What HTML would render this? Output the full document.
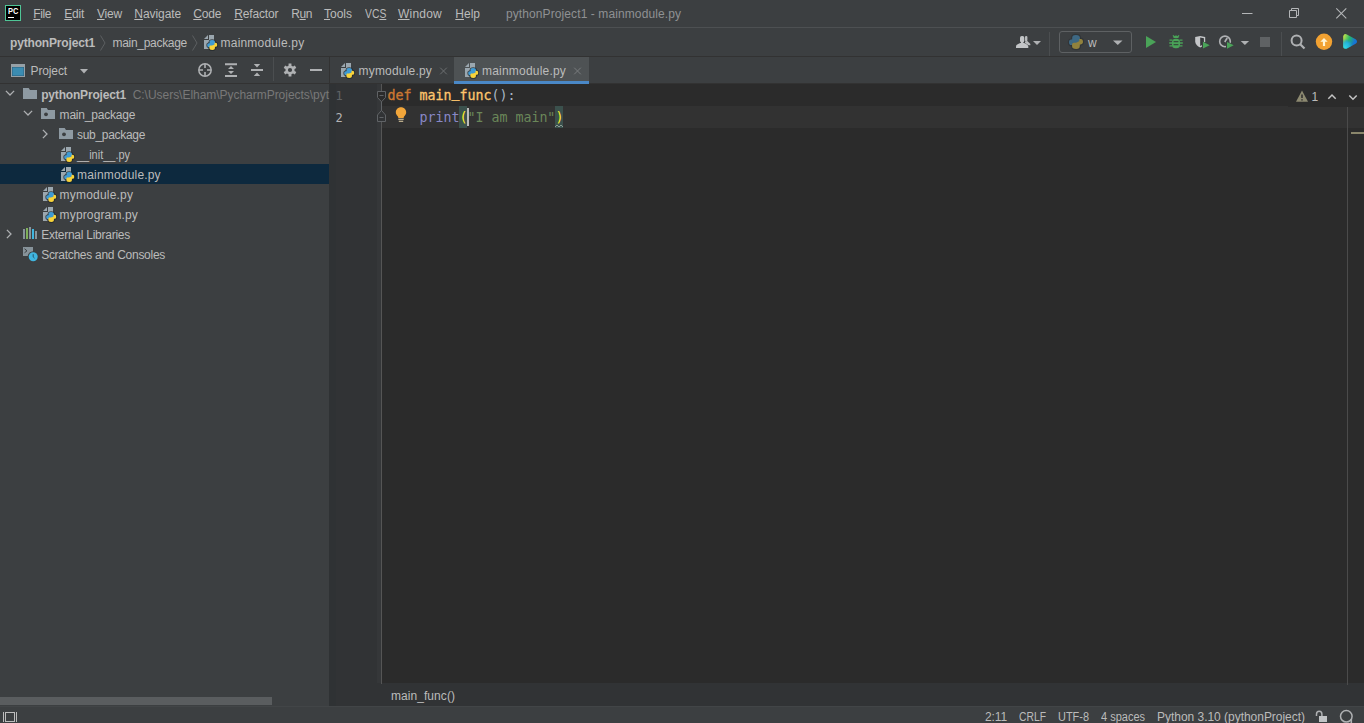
<!DOCTYPE html>
<html lang="en">
<head>
<meta charset="utf-8">
<title>pythonProject1 - mainmodule.py</title>
<style>
html,body{margin:0;padding:0;}
body{width:1364px;height:723px;overflow:hidden;background:#3c3f41;position:relative;font-family:"Liberation Sans",sans-serif;font-size:12px;color:#bbbbbb;}
.a{position:absolute;}
.t{position:absolute;white-space:pre;line-height:14px;height:14px;font-family:"Liberation Sans",sans-serif;}
.t u{text-decoration:underline;text-underline-offset:1px;text-decoration-thickness:1px;}
svg{position:absolute;overflow:visible;}
.code{position:absolute;white-space:pre;font-family:"DejaVu Sans Mono","Liberation Mono",monospace;font-size:13.3px;letter-spacing:-0.007px;line-height:22px;height:22px;}
.ln{font-size:12px;}
.us{position:relative;top:-3px;}
</style>
</head>
<body>
<!-- title bar -->
<div class="a" style="left:0;top:27px;width:1364px;height:1px;background:#4d5052"></div>
<!-- nav bar border -->
<div class="a" style="left:0;top:56px;width:1364px;height:1px;background:#323232"></div>
<!-- project tool window -->
<div class="a" style="left:0;top:83px;width:330px;height:1px;background:#323232"></div>
<div class="a" style="left:0;top:164px;width:329px;height:20px;background:#0d293e"></div>
<div class="a" style="left:329px;top:57px;width:1px;height:649px;background:#323232"></div>
<div class="a" style="left:0;top:697px;width:272px;height:8px;background:#5a5d5f"></div>
<!-- editor tabs -->
<div class="a" style="left:330px;top:83px;width:1034px;height:1px;background:#323232"></div>
<div class="a" style="left:454px;top:57px;width:135px;height:27px;background:#4e5254"></div>
<div class="a" style="left:454px;top:81px;width:135px;height:3px;background:#4a88c7"></div>
<!-- editor -->
<div class="a" style="left:330px;top:84px;width:1034px;height:599px;background:#2b2b2b"></div>
<div class="a" style="left:330px;top:84px;width:51px;height:599px;background:#313335"></div>
<div class="a" style="left:377px;top:84px;width:4px;height:599px;background:#353739"></div>
<div class="a" style="left:330px;top:683px;width:1034px;height:23px;background:#313335"></div>
<div class="a" style="left:329px;top:84px;width:7px;height:622px;background:#2f3234"></div>
<div class="a" style="left:381px;top:84px;width:1px;height:600px;background:#555555"></div>
<div class="a" style="left:382px;top:106px;width:982px;height:22px;background:#323232"></div>
<div class="a" style="left:1347px;top:84px;width:1px;height:601px;background:#4b4b4b"></div>
<div class="a" style="left:1351px;top:132px;width:13px;height:2px;background:#8a866b"></div>
<!-- status bar -->
<div class="a" style="left:0;top:706px;width:1364px;height:1px;background:#424547"></div>
<div class="a" style="left:5px;top:5px;width:14px;height:14px;border:1px solid #4fc596;background:#000"></div>
<div class="a" style="left:8px;top:17px;width:6px;height:1px;background:#fff"></div>
<svg style="left:1236px;top:4px" width="20" height="20" viewBox="0 0 20 20" ><path d="M6 9.5h10.5" stroke="#b4b6b8" stroke-width="1" fill="none"/></svg>
<svg style="left:1284px;top:4px" width="20" height="20" viewBox="0 0 20 20" ><path d="M5.5 6.5h7v7h-7zM7.5 6.5v-2h7v7h-2" stroke="#b4b6b8" stroke-width="1" fill="none"/></svg>
<svg style="left:1331px;top:3px" width="20" height="20" viewBox="0 0 20 20" ><path d="M5.3 5.3l10 10M15.3 5.3l-10 10" stroke="#b4b6b8" stroke-width="1.1" fill="none"/></svg>
<svg style="left:98px;top:34px" width="10" height="18" viewBox="0 0 10 18" ><path d="M2.5 1.5L7 9L2.5 16.5" fill="none" stroke="#5c5f61" stroke-width="1"/></svg>
<svg style="left:190px;top:34px" width="10" height="18" viewBox="0 0 10 18" ><path d="M2.5 1.5L7 9L2.5 16.5" fill="none" stroke="#5c5f61" stroke-width="1"/></svg>
<svg style="left:201px;top:34px" width="16" height="16" viewBox="0 0 16 16" ><path fill="#9ba7af" d="M7 1L3 5h4z"/><path fill="#9ba7af" d="M8 1v5H3v9h4.5V8h5.5V1z"/><g transform="translate(6.2,6)"><path d="M4.9 0C2.9 0 2.3.9 2.3 2V3.3H1.6C.5 3.3 0 4.2 0 5.1c0 1.2.5 2.1 1.6 2.1h1.1V5.9c0-.9.7-1.5 1.6-1.5h2.2c.8 0 1.3-.5 1.3-1.3V2C7.8.8 6.9 0 4.9 0z" fill="none" stroke="#1e2428" stroke-opacity=".75" stroke-width="1.7"/><path d="M5.1 10c2 0 2.6-.9 2.6-2V6.7h.7c1.1 0 1.6-.9 1.6-1.8 0-1.2-.5-2.1-1.6-2.1H7.3v1.3c0 .9-.7 1.5-1.6 1.5H3.5c-.8 0-1.3.5-1.3 1.3V8C2.2 9.2 3.1 10 5.1 10z" fill="none" stroke="#1e2428" stroke-opacity=".75" stroke-width="1.7"/><path d="M2.6 3h4.8v4H2.6z" fill="#3f97cf"/><path d="M7.4 4.2L2.6 7.2V7.6h4.8z" fill="#f5d03a"/><path fill="#409bd4" d="M4.9 0C2.9 0 2.3.9 2.3 2V3.3H1.6C.5 3.3 0 4.2 0 5.1c0 1.2.5 2.1 1.6 2.1h1.1V5.9c0-.9.7-1.5 1.6-1.5h2.2c.8 0 1.3-.5 1.3-1.3V2C7.8.8 6.9 0 4.9 0z"/><path fill="#f8d33a" d="M5.1 10c2 0 2.6-.9 2.6-2V6.7h.7c1.1 0 1.6-.9 1.6-1.8 0-1.2-.5-2.1-1.6-2.1H7.3v1.3c0 .9-.7 1.5-1.6 1.5H3.5c-.8 0-1.3.5-1.3 1.3V8C2.2 9.2 3.1 10 5.1 10z"/></g></svg>
<svg style="left:10px;top:63px" width="16" height="16" viewBox="0 0 16 16" ><rect x="1" y="1" width="14" height="13" fill="#96a0a6"/><rect x="2" y="4" width="12" height="9" fill="#2b5f7c"/><rect x="2.5" y="4.5" width="11" height="8" fill="#3b8cb1"/></svg>
<svg style="left:79px;top:67px" width="10" height="8" viewBox="0 0 10 8" ><path d="M1 2h8L5 6.5z" fill="#afb1b3"/></svg>
<svg style="left:197px;top:62px" width="16" height="16" viewBox="0 0 16 16" ><circle cx="8" cy="8" r="6.2" fill="none" stroke="#afb1b3" stroke-width="1.5"/><path d="M8 2v4M8 10v4M2 8h4M10 8h4" stroke="#afb1b3" stroke-width="1.6"/></svg>
<svg style="left:223px;top:62px" width="16" height="16" viewBox="0 0 16 16" ><path d="M2 1.3h12v2H2zM2 13h12v2H2zM8 3.9l3 3H5zM8 12l3-3H5z" fill="#afb1b3"/></svg>
<svg style="left:249px;top:62px" width="16" height="16" viewBox="0 0 16 16" ><path d="M2 7h12v2H2zM8 5.5l3.2-3.4H4.8zM8 10.5l3.2 3.4H4.8z" fill="#afb1b3"/></svg>
<div class="a" style="left:273px;top:57px;width:1px;height:24px;background:#4b4e50"></div>
<svg style="left:282px;top:62px" width="16" height="16" viewBox="0 0 16 16" ><path fill-rule="evenodd" fill="#afb1b3" d="M6.56 1.56L9.44 1.56L9.47 3.64L11.04 4.55L12.86 3.53L14.3 6.03L12.51 7.09L12.51 8.91L14.3 9.97L12.86 12.47L11.04 11.45L9.47 12.36L9.44 14.44L6.56 14.44L6.53 12.36L4.96 11.45L3.14 12.47L1.7 9.97L3.49 8.91L3.49 7.09L1.7 6.03L3.14 3.53L4.96 4.55L6.53 3.64zM5.9 8a2.1 2.1 0 1 0 4.2 0a2.1 2.1 0 1 0 -4.2 0z"/></svg>
<div class="a" style="left:310px;top:69px;width:12px;height:2px;background:#afb1b3"></div>
<svg style="left:3.5px;top:87.3px" width="12" height="12" viewBox="0 0 12 12" ><path d="M1.9 3.9L6 8L10.1 3.9" fill="none" stroke="#aeb0b2" stroke-width="1.3"/></svg>
<svg style="left:22px;top:86px" width="16" height="16" viewBox="0 0 16 16" ><path fill="#8e9aa2" d="M1 13h14V4H7.98L6.7 2H1z"/></svg>
<svg style="left:21.5px;top:107.3px" width="12" height="12" viewBox="0 0 12 12" ><path d="M1.9 3.9L6 8L10.1 3.9" fill="none" stroke="#aeb0b2" stroke-width="1.3"/></svg>
<svg style="left:40px;top:106px" width="16" height="16" viewBox="0 0 16 16" ><path fill="#8e9aa2" d="M1 13h14V4H7.98L6.7 2H1z"/><circle cx="6" cy="8.3" r="1.9" fill="#3c3f41"/></svg>
<svg style="left:39.3px;top:127.69999999999999px" width="12" height="12" viewBox="0 0 12 12" ><path d="M3.9 1.9L8 6L3.9 10.1" fill="none" stroke="#aeb0b2" stroke-width="1.3"/></svg>
<svg style="left:58px;top:126px" width="16" height="16" viewBox="0 0 16 16" ><path fill="#8e9aa2" d="M1 13h14V4H7.98L6.7 2H1z"/><circle cx="6" cy="8.3" r="1.9" fill="#3c3f41"/></svg>
<svg style="left:58px;top:146px" width="16" height="16" viewBox="0 0 16 16" ><path fill="#9ba7af" d="M7 1L3 5h4z"/><path fill="#9ba7af" d="M8 1v5H3v9h4.5V8h5.5V1z"/><g transform="translate(6.2,6)"><path d="M4.9 0C2.9 0 2.3.9 2.3 2V3.3H1.6C.5 3.3 0 4.2 0 5.1c0 1.2.5 2.1 1.6 2.1h1.1V5.9c0-.9.7-1.5 1.6-1.5h2.2c.8 0 1.3-.5 1.3-1.3V2C7.8.8 6.9 0 4.9 0z" fill="none" stroke="#1e2428" stroke-opacity=".75" stroke-width="1.7"/><path d="M5.1 10c2 0 2.6-.9 2.6-2V6.7h.7c1.1 0 1.6-.9 1.6-1.8 0-1.2-.5-2.1-1.6-2.1H7.3v1.3c0 .9-.7 1.5-1.6 1.5H3.5c-.8 0-1.3.5-1.3 1.3V8C2.2 9.2 3.1 10 5.1 10z" fill="none" stroke="#1e2428" stroke-opacity=".75" stroke-width="1.7"/><path d="M2.6 3h4.8v4H2.6z" fill="#3f97cf"/><path d="M7.4 4.2L2.6 7.2V7.6h4.8z" fill="#f5d03a"/><path fill="#409bd4" d="M4.9 0C2.9 0 2.3.9 2.3 2V3.3H1.6C.5 3.3 0 4.2 0 5.1c0 1.2.5 2.1 1.6 2.1h1.1V5.9c0-.9.7-1.5 1.6-1.5h2.2c.8 0 1.3-.5 1.3-1.3V2C7.8.8 6.9 0 4.9 0z"/><path fill="#f8d33a" d="M5.1 10c2 0 2.6-.9 2.6-2V6.7h.7c1.1 0 1.6-.9 1.6-1.8 0-1.2-.5-2.1-1.6-2.1H7.3v1.3c0 .9-.7 1.5-1.6 1.5H3.5c-.8 0-1.3.5-1.3 1.3V8C2.2 9.2 3.1 10 5.1 10z"/></g></svg>
<svg style="left:58px;top:166px" width="16" height="16" viewBox="0 0 16 16" ><path fill="#9ba7af" d="M7 1L3 5h4z"/><path fill="#9ba7af" d="M8 1v5H3v9h4.5V8h5.5V1z"/><g transform="translate(6.2,6)"><path d="M4.9 0C2.9 0 2.3.9 2.3 2V3.3H1.6C.5 3.3 0 4.2 0 5.1c0 1.2.5 2.1 1.6 2.1h1.1V5.9c0-.9.7-1.5 1.6-1.5h2.2c.8 0 1.3-.5 1.3-1.3V2C7.8.8 6.9 0 4.9 0z" fill="none" stroke="#1e2428" stroke-opacity=".75" stroke-width="1.7"/><path d="M5.1 10c2 0 2.6-.9 2.6-2V6.7h.7c1.1 0 1.6-.9 1.6-1.8 0-1.2-.5-2.1-1.6-2.1H7.3v1.3c0 .9-.7 1.5-1.6 1.5H3.5c-.8 0-1.3.5-1.3 1.3V8C2.2 9.2 3.1 10 5.1 10z" fill="none" stroke="#1e2428" stroke-opacity=".75" stroke-width="1.7"/><path d="M2.6 3h4.8v4H2.6z" fill="#3f97cf"/><path d="M7.4 4.2L2.6 7.2V7.6h4.8z" fill="#f5d03a"/><path fill="#409bd4" d="M4.9 0C2.9 0 2.3.9 2.3 2V3.3H1.6C.5 3.3 0 4.2 0 5.1c0 1.2.5 2.1 1.6 2.1h1.1V5.9c0-.9.7-1.5 1.6-1.5h2.2c.8 0 1.3-.5 1.3-1.3V2C7.8.8 6.9 0 4.9 0z"/><path fill="#f8d33a" d="M5.1 10c2 0 2.6-.9 2.6-2V6.7h.7c1.1 0 1.6-.9 1.6-1.8 0-1.2-.5-2.1-1.6-2.1H7.3v1.3c0 .9-.7 1.5-1.6 1.5H3.5c-.8 0-1.3.5-1.3 1.3V8C2.2 9.2 3.1 10 5.1 10z"/></g></svg>
<svg style="left:40px;top:186px" width="16" height="16" viewBox="0 0 16 16" ><path fill="#9ba7af" d="M7 1L3 5h4z"/><path fill="#9ba7af" d="M8 1v5H3v9h4.5V8h5.5V1z"/><g transform="translate(6.2,6)"><path d="M4.9 0C2.9 0 2.3.9 2.3 2V3.3H1.6C.5 3.3 0 4.2 0 5.1c0 1.2.5 2.1 1.6 2.1h1.1V5.9c0-.9.7-1.5 1.6-1.5h2.2c.8 0 1.3-.5 1.3-1.3V2C7.8.8 6.9 0 4.9 0z" fill="none" stroke="#1e2428" stroke-opacity=".75" stroke-width="1.7"/><path d="M5.1 10c2 0 2.6-.9 2.6-2V6.7h.7c1.1 0 1.6-.9 1.6-1.8 0-1.2-.5-2.1-1.6-2.1H7.3v1.3c0 .9-.7 1.5-1.6 1.5H3.5c-.8 0-1.3.5-1.3 1.3V8C2.2 9.2 3.1 10 5.1 10z" fill="none" stroke="#1e2428" stroke-opacity=".75" stroke-width="1.7"/><path d="M2.6 3h4.8v4H2.6z" fill="#3f97cf"/><path d="M7.4 4.2L2.6 7.2V7.6h4.8z" fill="#f5d03a"/><path fill="#409bd4" d="M4.9 0C2.9 0 2.3.9 2.3 2V3.3H1.6C.5 3.3 0 4.2 0 5.1c0 1.2.5 2.1 1.6 2.1h1.1V5.9c0-.9.7-1.5 1.6-1.5h2.2c.8 0 1.3-.5 1.3-1.3V2C7.8.8 6.9 0 4.9 0z"/><path fill="#f8d33a" d="M5.1 10c2 0 2.6-.9 2.6-2V6.7h.7c1.1 0 1.6-.9 1.6-1.8 0-1.2-.5-2.1-1.6-2.1H7.3v1.3c0 .9-.7 1.5-1.6 1.5H3.5c-.8 0-1.3.5-1.3 1.3V8C2.2 9.2 3.1 10 5.1 10z"/></g></svg>
<svg style="left:40px;top:206px" width="16" height="16" viewBox="0 0 16 16" ><path fill="#9ba7af" d="M7 1L3 5h4z"/><path fill="#9ba7af" d="M8 1v5H3v9h4.5V8h5.5V1z"/><g transform="translate(6.2,6)"><path d="M4.9 0C2.9 0 2.3.9 2.3 2V3.3H1.6C.5 3.3 0 4.2 0 5.1c0 1.2.5 2.1 1.6 2.1h1.1V5.9c0-.9.7-1.5 1.6-1.5h2.2c.8 0 1.3-.5 1.3-1.3V2C7.8.8 6.9 0 4.9 0z" fill="none" stroke="#1e2428" stroke-opacity=".75" stroke-width="1.7"/><path d="M5.1 10c2 0 2.6-.9 2.6-2V6.7h.7c1.1 0 1.6-.9 1.6-1.8 0-1.2-.5-2.1-1.6-2.1H7.3v1.3c0 .9-.7 1.5-1.6 1.5H3.5c-.8 0-1.3.5-1.3 1.3V8C2.2 9.2 3.1 10 5.1 10z" fill="none" stroke="#1e2428" stroke-opacity=".75" stroke-width="1.7"/><path d="M2.6 3h4.8v4H2.6z" fill="#3f97cf"/><path d="M7.4 4.2L2.6 7.2V7.6h4.8z" fill="#f5d03a"/><path fill="#409bd4" d="M4.9 0C2.9 0 2.3.9 2.3 2V3.3H1.6C.5 3.3 0 4.2 0 5.1c0 1.2.5 2.1 1.6 2.1h1.1V5.9c0-.9.7-1.5 1.6-1.5h2.2c.8 0 1.3-.5 1.3-1.3V2C7.8.8 6.9 0 4.9 0z"/><path fill="#f8d33a" d="M5.1 10c2 0 2.6-.9 2.6-2V6.7h.7c1.1 0 1.6-.9 1.6-1.8 0-1.2-.5-2.1-1.6-2.1H7.3v1.3c0 .9-.7 1.5-1.6 1.5H3.5c-.8 0-1.3.5-1.3 1.3V8C2.2 9.2 3.1 10 5.1 10z"/></g></svg>
<svg style="left:3.1999999999999993px;top:227.6px" width="12" height="12" viewBox="0 0 12 12" ><path d="M3.9 1.9L8 6L3.9 10.1" fill="none" stroke="#aeb0b2" stroke-width="1.3"/></svg>
<svg style="left:22px;top:226px" width="16" height="16" viewBox="0 0 16 16" ><rect x="1" y="3" width="2" height="10" fill="#87939a"/><rect x="4" y="2" width="2" height="11" fill="#7fb05b"/><rect x="7" y="1" width="2" height="12" fill="#87939a"/><rect x="10" y="3" width="2" height="10" fill="#40b6e0"/><rect x="13" y="5" width="2" height="8" fill="#87939a"/></svg>
<svg style="left:22px;top:246px" width="16" height="16" viewBox="0 0 16 16" ><rect x="1" y="1" width="10" height="9" fill="#87939a"/><path d="M2.5 2.8L5 4.8L2.5 6.8" fill="none" stroke="#3c3f41" stroke-width="1"/><circle cx="11.2" cy="10.7" r="5.5" fill="#3c3f41"/><circle cx="11.2" cy="10.7" r="4.5" fill="#40b6e0"/><path d="M11.2 8.2v2.7l1.3 1.2" fill="none" stroke="#26566c" stroke-width="1"/></svg>
<svg style="left:338px;top:62px" width="16" height="16" viewBox="0 0 16 16" ><path fill="#9ba7af" d="M7 1L3 5h4z"/><path fill="#9ba7af" d="M8 1v5H3v9h4.5V8h5.5V1z"/><g transform="translate(6.2,6)"><path d="M4.9 0C2.9 0 2.3.9 2.3 2V3.3H1.6C.5 3.3 0 4.2 0 5.1c0 1.2.5 2.1 1.6 2.1h1.1V5.9c0-.9.7-1.5 1.6-1.5h2.2c.8 0 1.3-.5 1.3-1.3V2C7.8.8 6.9 0 4.9 0z" fill="none" stroke="#1e2428" stroke-opacity=".75" stroke-width="1.7"/><path d="M5.1 10c2 0 2.6-.9 2.6-2V6.7h.7c1.1 0 1.6-.9 1.6-1.8 0-1.2-.5-2.1-1.6-2.1H7.3v1.3c0 .9-.7 1.5-1.6 1.5H3.5c-.8 0-1.3.5-1.3 1.3V8C2.2 9.2 3.1 10 5.1 10z" fill="none" stroke="#1e2428" stroke-opacity=".75" stroke-width="1.7"/><path d="M2.6 3h4.8v4H2.6z" fill="#3f97cf"/><path d="M7.4 4.2L2.6 7.2V7.6h4.8z" fill="#f5d03a"/><path fill="#409bd4" d="M4.9 0C2.9 0 2.3.9 2.3 2V3.3H1.6C.5 3.3 0 4.2 0 5.1c0 1.2.5 2.1 1.6 2.1h1.1V5.9c0-.9.7-1.5 1.6-1.5h2.2c.8 0 1.3-.5 1.3-1.3V2C7.8.8 6.9 0 4.9 0z"/><path fill="#f8d33a" d="M5.1 10c2 0 2.6-.9 2.6-2V6.7h.7c1.1 0 1.6-.9 1.6-1.8 0-1.2-.5-2.1-1.6-2.1H7.3v1.3c0 .9-.7 1.5-1.6 1.5H3.5c-.8 0-1.3.5-1.3 1.3V8C2.2 9.2 3.1 10 5.1 10z"/></g></svg>
<svg style="left:462px;top:62px" width="16" height="16" viewBox="0 0 16 16" ><path fill="#9ba7af" d="M7 1L3 5h4z"/><path fill="#9ba7af" d="M8 1v5H3v9h4.5V8h5.5V1z"/><g transform="translate(6.2,6)"><path d="M4.9 0C2.9 0 2.3.9 2.3 2V3.3H1.6C.5 3.3 0 4.2 0 5.1c0 1.2.5 2.1 1.6 2.1h1.1V5.9c0-.9.7-1.5 1.6-1.5h2.2c.8 0 1.3-.5 1.3-1.3V2C7.8.8 6.9 0 4.9 0z" fill="none" stroke="#1e2428" stroke-opacity=".75" stroke-width="1.7"/><path d="M5.1 10c2 0 2.6-.9 2.6-2V6.7h.7c1.1 0 1.6-.9 1.6-1.8 0-1.2-.5-2.1-1.6-2.1H7.3v1.3c0 .9-.7 1.5-1.6 1.5H3.5c-.8 0-1.3.5-1.3 1.3V8C2.2 9.2 3.1 10 5.1 10z" fill="none" stroke="#1e2428" stroke-opacity=".75" stroke-width="1.7"/><path d="M2.6 3h4.8v4H2.6z" fill="#3f97cf"/><path d="M7.4 4.2L2.6 7.2V7.6h4.8z" fill="#f5d03a"/><path fill="#409bd4" d="M4.9 0C2.9 0 2.3.9 2.3 2V3.3H1.6C.5 3.3 0 4.2 0 5.1c0 1.2.5 2.1 1.6 2.1h1.1V5.9c0-.9.7-1.5 1.6-1.5h2.2c.8 0 1.3-.5 1.3-1.3V2C7.8.8 6.9 0 4.9 0z"/><path fill="#f8d33a" d="M5.1 10c2 0 2.6-.9 2.6-2V6.7h.7c1.1 0 1.6-.9 1.6-1.8 0-1.2-.5-2.1-1.6-2.1H7.3v1.3c0 .9-.7 1.5-1.6 1.5H3.5c-.8 0-1.3.5-1.3 1.3V8C2.2 9.2 3.1 10 5.1 10z"/></g></svg>
<svg style="left:439px;top:66px" width="10" height="10" viewBox="0 0 10 10" ><path d="M1.2 1.7L7.8 8.3M7.8 1.7L1.2 8.3" stroke="#6c6f71" stroke-width="1" fill="none"/></svg>
<svg style="left:572.5px;top:66px" width="10" height="10" viewBox="0 0 10 10" ><path d="M1.2 1.7L7.8 8.3M7.8 1.7L1.2 8.3" stroke="#797c7e" stroke-width="1" fill="none"/></svg>
<svg style="left:1014px;top:34px" width="18" height="16" viewBox="0 0 18 16" ><rect x="11" y="2" width="2.4" height="5.4" rx="1.1" fill="#b9bbbd"/><path d="M11 7.4L13.3 7L16.4 10V11.3H14.6L11 9z" fill="#b9bbbd"/><rect x="6" y="2" width="4.3" height="6.5" rx="1.8" fill="#c3c5c7"/><rect x="7" y="7.5" width="2.3" height="2" fill="#c3c5c7"/><path d="M2 14V12.6C2 11 4 10 6.2 9H10.1C12.3 10 14.3 11 14.3 12.6V14z" fill="#c3c5c7"/></svg>
<svg style="left:1032px;top:38px" width="10" height="8" viewBox="0 0 10 8" ><path d="M1 3h8L5 7z" fill="#afb1b3"/></svg>
<div class="a" style="left:1049px;top:32px;width:1px;height:24px;background:#4b4e50"></div>
<div class="a" style="left:1059px;top:31px;width:71px;height:20px;border:1px solid #5e6163;border-radius:3px"></div>
<svg style="left:1069px;top:35px" width="14" height="14" viewBox="0 0 14 14" ><g transform="scale(1.4)" opacity=".45"><path d="M4.9 0C2.9 0 2.3.9 2.3 2V3.3H1.6C.5 3.3 0 4.2 0 5.1c0 1.2.5 2.1 1.6 2.1h1.1V5.9c0-.9.7-1.5 1.6-1.5h2.2c.8 0 1.3-.5 1.3-1.3V2C7.8.8 6.9 0 4.9 0z" fill="none" stroke="#1e2428" stroke-opacity=".75" stroke-width="1.7"/><path d="M5.1 10c2 0 2.6-.9 2.6-2V6.7h.7c1.1 0 1.6-.9 1.6-1.8 0-1.2-.5-2.1-1.6-2.1H7.3v1.3c0 .9-.7 1.5-1.6 1.5H3.5c-.8 0-1.3.5-1.3 1.3V8C2.2 9.2 3.1 10 5.1 10z" fill="none" stroke="#1e2428" stroke-opacity=".75" stroke-width="1.7"/><path d="M2.6 3h4.8v4H2.6z" fill="#3f97cf"/><path d="M7.4 4.2L2.6 7.2V7.6h4.8z" fill="#f5d03a"/><path fill="#409bd4" d="M4.9 0C2.9 0 2.3.9 2.3 2V3.3H1.6C.5 3.3 0 4.2 0 5.1c0 1.2.5 2.1 1.6 2.1h1.1V5.9c0-.9.7-1.5 1.6-1.5h2.2c.8 0 1.3-.5 1.3-1.3V2C7.8.8 6.9 0 4.9 0z"/><path fill="#f8d33a" d="M5.1 10c2 0 2.6-.9 2.6-2V6.7h.7c1.1 0 1.6-.9 1.6-1.8 0-1.2-.5-2.1-1.6-2.1H7.3v1.3c0 .9-.7 1.5-1.6 1.5H3.5c-.8 0-1.3.5-1.3 1.3V8C2.2 9.2 3.1 10 5.1 10z"/></g></svg>
<svg style="left:1112px;top:38px" width="12" height="8" viewBox="0 0 12 8" ><path d="M1 2.5h9.5L5.75 7z" fill="#afb1b3"/></svg>
<svg style="left:1143px;top:34px" width="16" height="16" viewBox="0 0 16 16" ><path d="M3 2l10 6l-10 6z" fill="#4aa358"/></svg>
<svg style="left:1168px;top:34px" width="16" height="16" viewBox="0 0 16 16" ><path fill="#4aa358" d="M5.4 4a2.6 2.6 0 0 1 5.2 0z"/><rect x="4" y="4.7" width="8" height="9.6" rx="3.6" fill="#4aa358"/><path d="M1.5 6.2h3M1.2 9h3M1.5 11.8h3M11.5 6.2h3M11.8 9h3M11.5 11.8h3M5 1.3l1.2 1.5M11 1.3L9.8 2.8" stroke="#4aa358" stroke-width="1.3" fill="none"/><path d="M5.6 7.6h4.8M5.6 10.6h4.8" stroke="#35503c" stroke-width="1.3"/></svg>
<svg style="left:1192px;top:34px" width="18" height="16" viewBox="0 0 18 16" ><path d="M3.2 3L8.2 2l5 1v4.3c0 3-2.2 4.9-5 6.3c-2.8-1.4-5-3.3-5-6.3z" fill="#c4c6c8"/><path d="M8.2 3.4l3.7.8v3.3c0 2-1.4 3.4-3.7 4.6z" fill="#36393b"/><path d="M10 6.7l8.3 4.3l-8.3 4.4z" fill="#3c3f41"/><path d="M11 7.8l6.7 3.4L11 14.6z" fill="#4aa358"/></svg>
<svg style="left:1217px;top:34px" width="18" height="16" viewBox="0 0 18 16" ><circle cx="8" cy="7.4" r="5.3" fill="none" stroke="#afb1b3" stroke-width="1.6"/><path d="M7.8 8L10.2 4" stroke="#afb1b3" stroke-width="1.7"/><path d="M9 6.7l8.7 4.4L9 15.6z" fill="#3c3f41"/><path d="M10 8l6.7 3.3L10 14.8z" fill="#4aa358"/></svg>
<svg style="left:1240px;top:38px" width="10" height="8" viewBox="0 0 10 8" ><path d="M.7 3h8.4L4.9 7z" fill="#afb1b3"/></svg>
<div class="a" style="left:1260px;top:37px;width:10px;height:10px;background:#5f6264"></div>
<div class="a" style="left:1281px;top:32px;width:1px;height:24px;background:#4b4e50"></div>
<svg style="left:1289px;top:33px" width="18" height="18" viewBox="0 0 18 18" ><circle cx="7.6" cy="7.5" r="5" fill="none" stroke="#afb1b3" stroke-width="2"/><path d="M11 11l4.5 4.5" stroke="#afb1b3" stroke-width="2.2"/></svg>
<svg style="left:1315px;top:33px" width="18" height="18" viewBox="0 0 18 18" ><circle cx="9" cy="8.7" r="8.2" fill="#f2a232"/><path d="M9 5l3.7 3.8h-2.6v4.2h-2.2V8.8H5.3z" fill="#fff6d6"/></svg>
<svg style="left:1342px;top:33px" width="17" height="17" viewBox="0 0 17 17" ><defs><linearGradient id="cg1" gradientUnits="userSpaceOnUse" x1="1" y1="4" x2="15.5" y2="9"><stop offset="0" stop-color="#c6e24a"/><stop offset=".42" stop-color="#25b868"/><stop offset=".8" stop-color="#1776d4"/><stop offset="1" stop-color="#1570d6"/></linearGradient><radialGradient id="cg2" gradientUnits="userSpaceOnUse" cx="3" cy="14.5" r="8.5"><stop offset="0" stop-color="#2fd6ee"/><stop offset=".55" stop-color="#23b6e2" stop-opacity=".85"/><stop offset="1" stop-color="#1b8fdc" stop-opacity="0"/></radialGradient></defs><path d="M3.7 3.7L3.7 13.3L12.4 8.5z" fill="url(#cg1)" stroke="url(#cg1)" stroke-width="5" stroke-linejoin="round"/><path d="M3.7 3.7L3.7 13.3L12.4 8.5z" fill="url(#cg2)" stroke="url(#cg2)" stroke-width="5" stroke-linejoin="round"/></svg>
<div class="a" style="left:1288px;top:84px;width:76px;height:23px;background:#2b2b2b"></div>
<svg style="left:1295px;top:89px" width="14" height="14" viewBox="0 0 14 14" ><path d="M7 1.5L13 12.8H1z" fill="#8c8970"/><path d="M7 5.5v3.5M7 10.2v1.4" stroke="#2b2b2b" stroke-width="1.5"/></svg>
<svg style="left:1326px;top:91px" width="12" height="12" viewBox="0 0 12 12" ><path d="M2.3 7.7L6 4L9.7 7.7" fill="none" stroke="#c4c4c4" stroke-width="1.5"/></svg>
<svg style="left:1347px;top:91px" width="12" height="12" viewBox="0 0 12 12" ><path d="M2.3 4.5L6 8.2L9.7 4.5" fill="none" stroke="#c4c4c4" stroke-width="1.5"/></svg>
<svg style="left:376px;top:90px" width="12" height="34" viewBox="0 0 12 34" ><path d="M5.5 12v8.4" stroke="#606366" stroke-width="1" fill="none"/><path d="M1.5 1.5h8v6l-4 4.3l-4-4.3z" fill="#2b2b2b" stroke="#606366" stroke-width="1"/><path d="M3.5 5.5h4" stroke="#606366" stroke-width="1"/><path d="M1.5 31.5h8v-6.5l-4-4.6l-4 4.6z" fill="#313335" stroke="#606366" stroke-width="1"/><path d="M3.5 27.5h4" stroke="#606366" stroke-width="1"/></svg>
<svg style="left:394px;top:106px" width="14" height="17" viewBox="0 0 14 17" ><path d="M7 1.3c3 0 5.2 2.2 5.2 5c0 1.9-1 3-1.9 3.9c-.5.5-.6 1-.6 1.7H4.3c0-.7-.1-1.2-.6-1.7C2.8 9.3 1.8 8.2 1.8 6.3c0-2.8 2.2-5 5.2-5z" fill="#f2a63a"/><path d="M4.3 13.3h5.4M4.8 15.3h4.4" stroke="#e6d3a8" stroke-width="1.1"/></svg>
<div class="a" style="left:3px;top:712px;width:1px;height:10px;background:#bcbcbc"></div>
<div class="a" style="left:5px;top:712px;width:8px;height:8px;border:1px solid #bcbcbc"></div>
<div class="a" style="left:16px;top:712px;width:1px;height:10px;background:#bcbcbc"></div>
<svg style="left:1314px;top:709px" width="14" height="14" viewBox="0 0 14 14" ><path d="M2.5 7V5.2c0-2 1.2-3 2.7-3s2.7 1 2.7 3V7" fill="none" stroke="#afb1b3" stroke-width="1.5"/><rect x="5" y="7" width="8" height="6" fill="#c2c4c6"/></svg>
<svg style="left:1338px;top:708px" width="18" height="16" viewBox="0 0 18 16" ><circle cx="8.3" cy="8.3" r="5.8" fill="none" stroke="#afb1b3" stroke-width="1.5"/><path d="M13.3 11v5" stroke="#afb1b3" stroke-width="1.6"/></svg>
<!-- code -->
<div class="a" style="left:459px;top:106px;width:8px;height:22px;background:#3b514d"></div>
<div class="a" style="left:555px;top:106px;width:8px;height:22px;background:#3b514d"></div>
<svg style="left:555px;top:124px" width="8" height="4" viewBox="0 0 8 4"><path d="M0 3l2-2l2 2l2-2l2 2" fill="none" stroke="#8a9b94" stroke-width="1"/></svg>
<div class="code ln" style="left:335.500px;top:85px;color:#606366">1</div>
<div class="code ln" style="left:335.500px;top:107px;color:#b4b4b4">2</div>
<div class="code" style="left:387.4px;top:85px;color:#a9b7c6"><span style="color:#cc7832;-webkit-text-stroke:.35px #cc7832">def</span> <span style="color:#ffc66d;-webkit-text-stroke:.3px #ffc66d">main<span class="us">_</span>func</span>():</div>
<div class="code" style="left:387.4px;top:107px;color:#a9b7c6">    <span style="color:#8888c6">print</span><span style="color:#ffef28">(</span><span style="color:#6a8759">"I am main"</span><span style="color:#ffef28">)</span></div>
<div class="a" style="left:467px;top:108px;width:2px;height:18px;background:#bbbbbb"></div>

<span class="t" style="left:33.3px;top:7px;color:#bbbbbb;font-size:12px;letter-spacing:-0.365px;"><u>F</u>ile</span>
<span class="t" style="left:64.3px;top:7px;color:#bbbbbb;font-size:12px;letter-spacing:-0.201px;"><u>E</u>dit</span>
<span class="t" style="left:97.0px;top:7px;color:#bbbbbb;font-size:12px;letter-spacing:-0.203px;"><u>V</u>iew</span>
<span class="t" style="left:134.3px;top:7px;color:#bbbbbb;font-size:12px;letter-spacing:-0.059px;"><u>N</u>avigate</span>
<span class="t" style="left:193.3px;top:7px;color:#bbbbbb;font-size:12px;letter-spacing:-0.176px;"><u>C</u>ode</span>
<span class="t" style="left:234.3px;top:7px;color:#bbbbbb;font-size:12px;letter-spacing:-0.170px;"><u>R</u>efactor</span>
<span class="t" style="left:291.3px;top:7px;color:#bbbbbb;font-size:12px;letter-spacing:-0.449px;">R<u>u</u>n</span>
<span class="t" style="left:324.0px;top:7px;color:#bbbbbb;font-size:12px;letter-spacing:-0.003px;"><u>T</u>ools</span>
<span class="t" style="left:365.0px;top:7px;color:#bbbbbb;font-size:12px;transform:scaleX(0.8628);transform-origin:0 0;">VC<u>S</u></span>
<span class="t" style="left:398.0px;top:7px;color:#bbbbbb;font-size:12px;letter-spacing:0.219px;"><u>W</u>indow</span>
<span class="t" style="left:455.3px;top:7px;color:#bbbbbb;font-size:12px;letter-spacing:0.003px;"><u>H</u>elp</span>
<span class="t" style="left:506.0px;top:7px;color:#8f9193;font-size:12px;letter-spacing:0.097px;">pythonProject1 - mainmodule.py</span>
<span class="t" style="left:7.6px;top:4px;color:#ffffff;font-size:9px;transform:scaleX(0.8310);transform-origin:0 0;font-weight:bold">PC</span>
<span class="t" style="left:10.0px;top:36px;color:#bbbbbb;font-size:12px;letter-spacing:-0.169px;font-weight:bold">pythonProject1</span>
<span class="t" style="left:112.5px;top:36px;color:#bbbbbb;font-size:12px;letter-spacing:-0.297px;">main_package</span>
<span class="t" style="left:220.6px;top:36px;color:#bbbbbb;font-size:12px;letter-spacing:0.187px;">mainmodule.py</span>
<span class="t" style="left:30.5px;top:64px;color:#bbbbbb;font-size:12px;letter-spacing:-0.123px;">Project</span>
<span class="t" style="left:41.2px;top:88px;color:#bbbbbb;font-size:12px;letter-spacing:-0.183px;font-weight:bold">pythonProject1</span>
<span class="t" style="left:132.7px;top:88px;color:#787878;font-size:12px;letter-spacing:-0.032px;">C:\Users\Elham\PycharmProjects\pyt</span>
<span class="t" style="left:59.6px;top:108px;color:#bbbbbb;font-size:12px;letter-spacing:-0.197px;">main_package</span>
<span class="t" style="left:77.0px;top:128px;color:#bbbbbb;font-size:12px;letter-spacing:-0.308px;">sub_package</span>
<span class="t" style="left:77.0px;top:148px;color:#bbbbbb;font-size:12px;transform:scaleX(0.9131);transform-origin:0 0;">__init__.py</span>
<span class="t" style="left:77.0px;top:168px;color:#bbbbbb;font-size:12px;letter-spacing:0.187px;">mainmodule.py</span>
<span class="t" style="left:59.6px;top:188px;color:#bbbbbb;font-size:12px;letter-spacing:0.202px;">mymodule.py</span>
<span class="t" style="left:59.6px;top:208px;color:#bbbbbb;font-size:12px;letter-spacing:0.143px;">myprogram.py</span>
<span class="t" style="left:41.2px;top:228px;color:#bbbbbb;font-size:12px;letter-spacing:-0.254px;">External Libraries</span>
<span class="t" style="left:41.2px;top:248px;color:#bbbbbb;font-size:12px;letter-spacing:-0.285px;">Scratches and Consoles</span>
<span class="t" style="left:358.5px;top:64px;color:#bbbbbb;font-size:12px;letter-spacing:0.193px;">mymodule.py</span>
<span class="t" style="left:482.0px;top:64px;color:#bbbbbb;font-size:12px;letter-spacing:0.202px;">mainmodule.py</span>
<span class="t" style="left:1088.0px;top:36px;color:#bbbbbb;font-size:12px;letter-spacing:0.000px;">w</span>
<span class="t" style="left:1311.5px;top:90px;color:#bbbbbb;font-size:12px;letter-spacing:0.000px;">1</span>
<span class="t" style="left:391.0px;top:689px;color:#bbbbbb;font-size:12px;letter-spacing:0.058px;">main_func()</span>
<span class="t" style="left:985.0px;top:710px;color:#bbbbbb;font-size:12px;letter-spacing:-0.117px;">2:11</span>
<span class="t" style="left:1019.0px;top:710px;color:#bbbbbb;font-size:12px;transform:scaleX(0.8614);transform-origin:0 0;">CRLF</span>
<span class="t" style="left:1058.0px;top:710px;color:#bbbbbb;font-size:12px;transform:scaleX(0.9118);transform-origin:0 0;">UTF-8</span>
<span class="t" style="left:1101.0px;top:710px;color:#bbbbbb;font-size:12px;transform:scaleX(0.9161);transform-origin:0 0;">4 spaces</span>
<span class="t" style="left:1157.0px;top:710px;color:#bbbbbb;font-size:12px;letter-spacing:-0.028px;">Python 3.10 (pythonProject)</span>
</body>
</html>
